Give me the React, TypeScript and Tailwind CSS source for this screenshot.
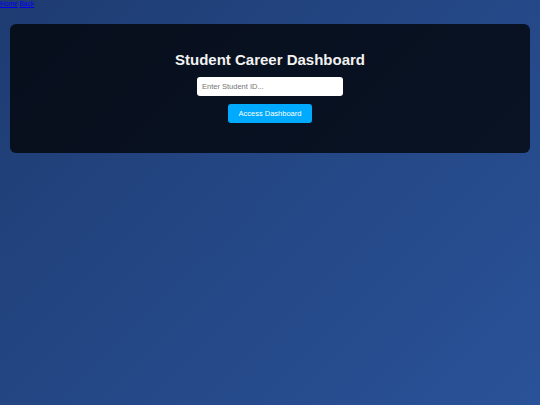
import React from "react";

export default function App() {
  return (
    <div
      className="min-h-[405px] w-full bg-[linear-gradient(135deg,#1e3c72,#2a5298)] text-white"
      style={{ fontFamily: '"Liberation Sans", Arial, sans-serif' }}
    >
      <nav className="h-[8px] text-[6.6px] leading-[8px]">
        <a href="#" className="text-[#0000ee] underline">Home</a>{" "}
        <a href="#" className="text-[#0000ee] underline">Back</a>
      </nav>
      <div className="px-[10px] pt-[16px]">
        <div className="flex h-[129px] flex-col items-center rounded-[6px] bg-black/75 pt-[27px]">
          <h1 className="text-[15px] font-bold leading-[18px] text-[#f2f2f2]">Student Career Dashboard</h1>
          <input
            type="text"
            placeholder="Enter Student ID..."
            className="mt-[8px] h-[19px] w-[146px] rounded-[3px] bg-white px-[5px] text-[7.5px] text-black placeholder:text-[#757575] outline-none"
          />
          <button className="mt-[8px] h-[19px] w-[84px] rounded-[3px] bg-[#00aaff] text-[7.5px] text-white">
            Access Dashboard
          </button>
        </div>
      </div>
    </div>
  );
}
